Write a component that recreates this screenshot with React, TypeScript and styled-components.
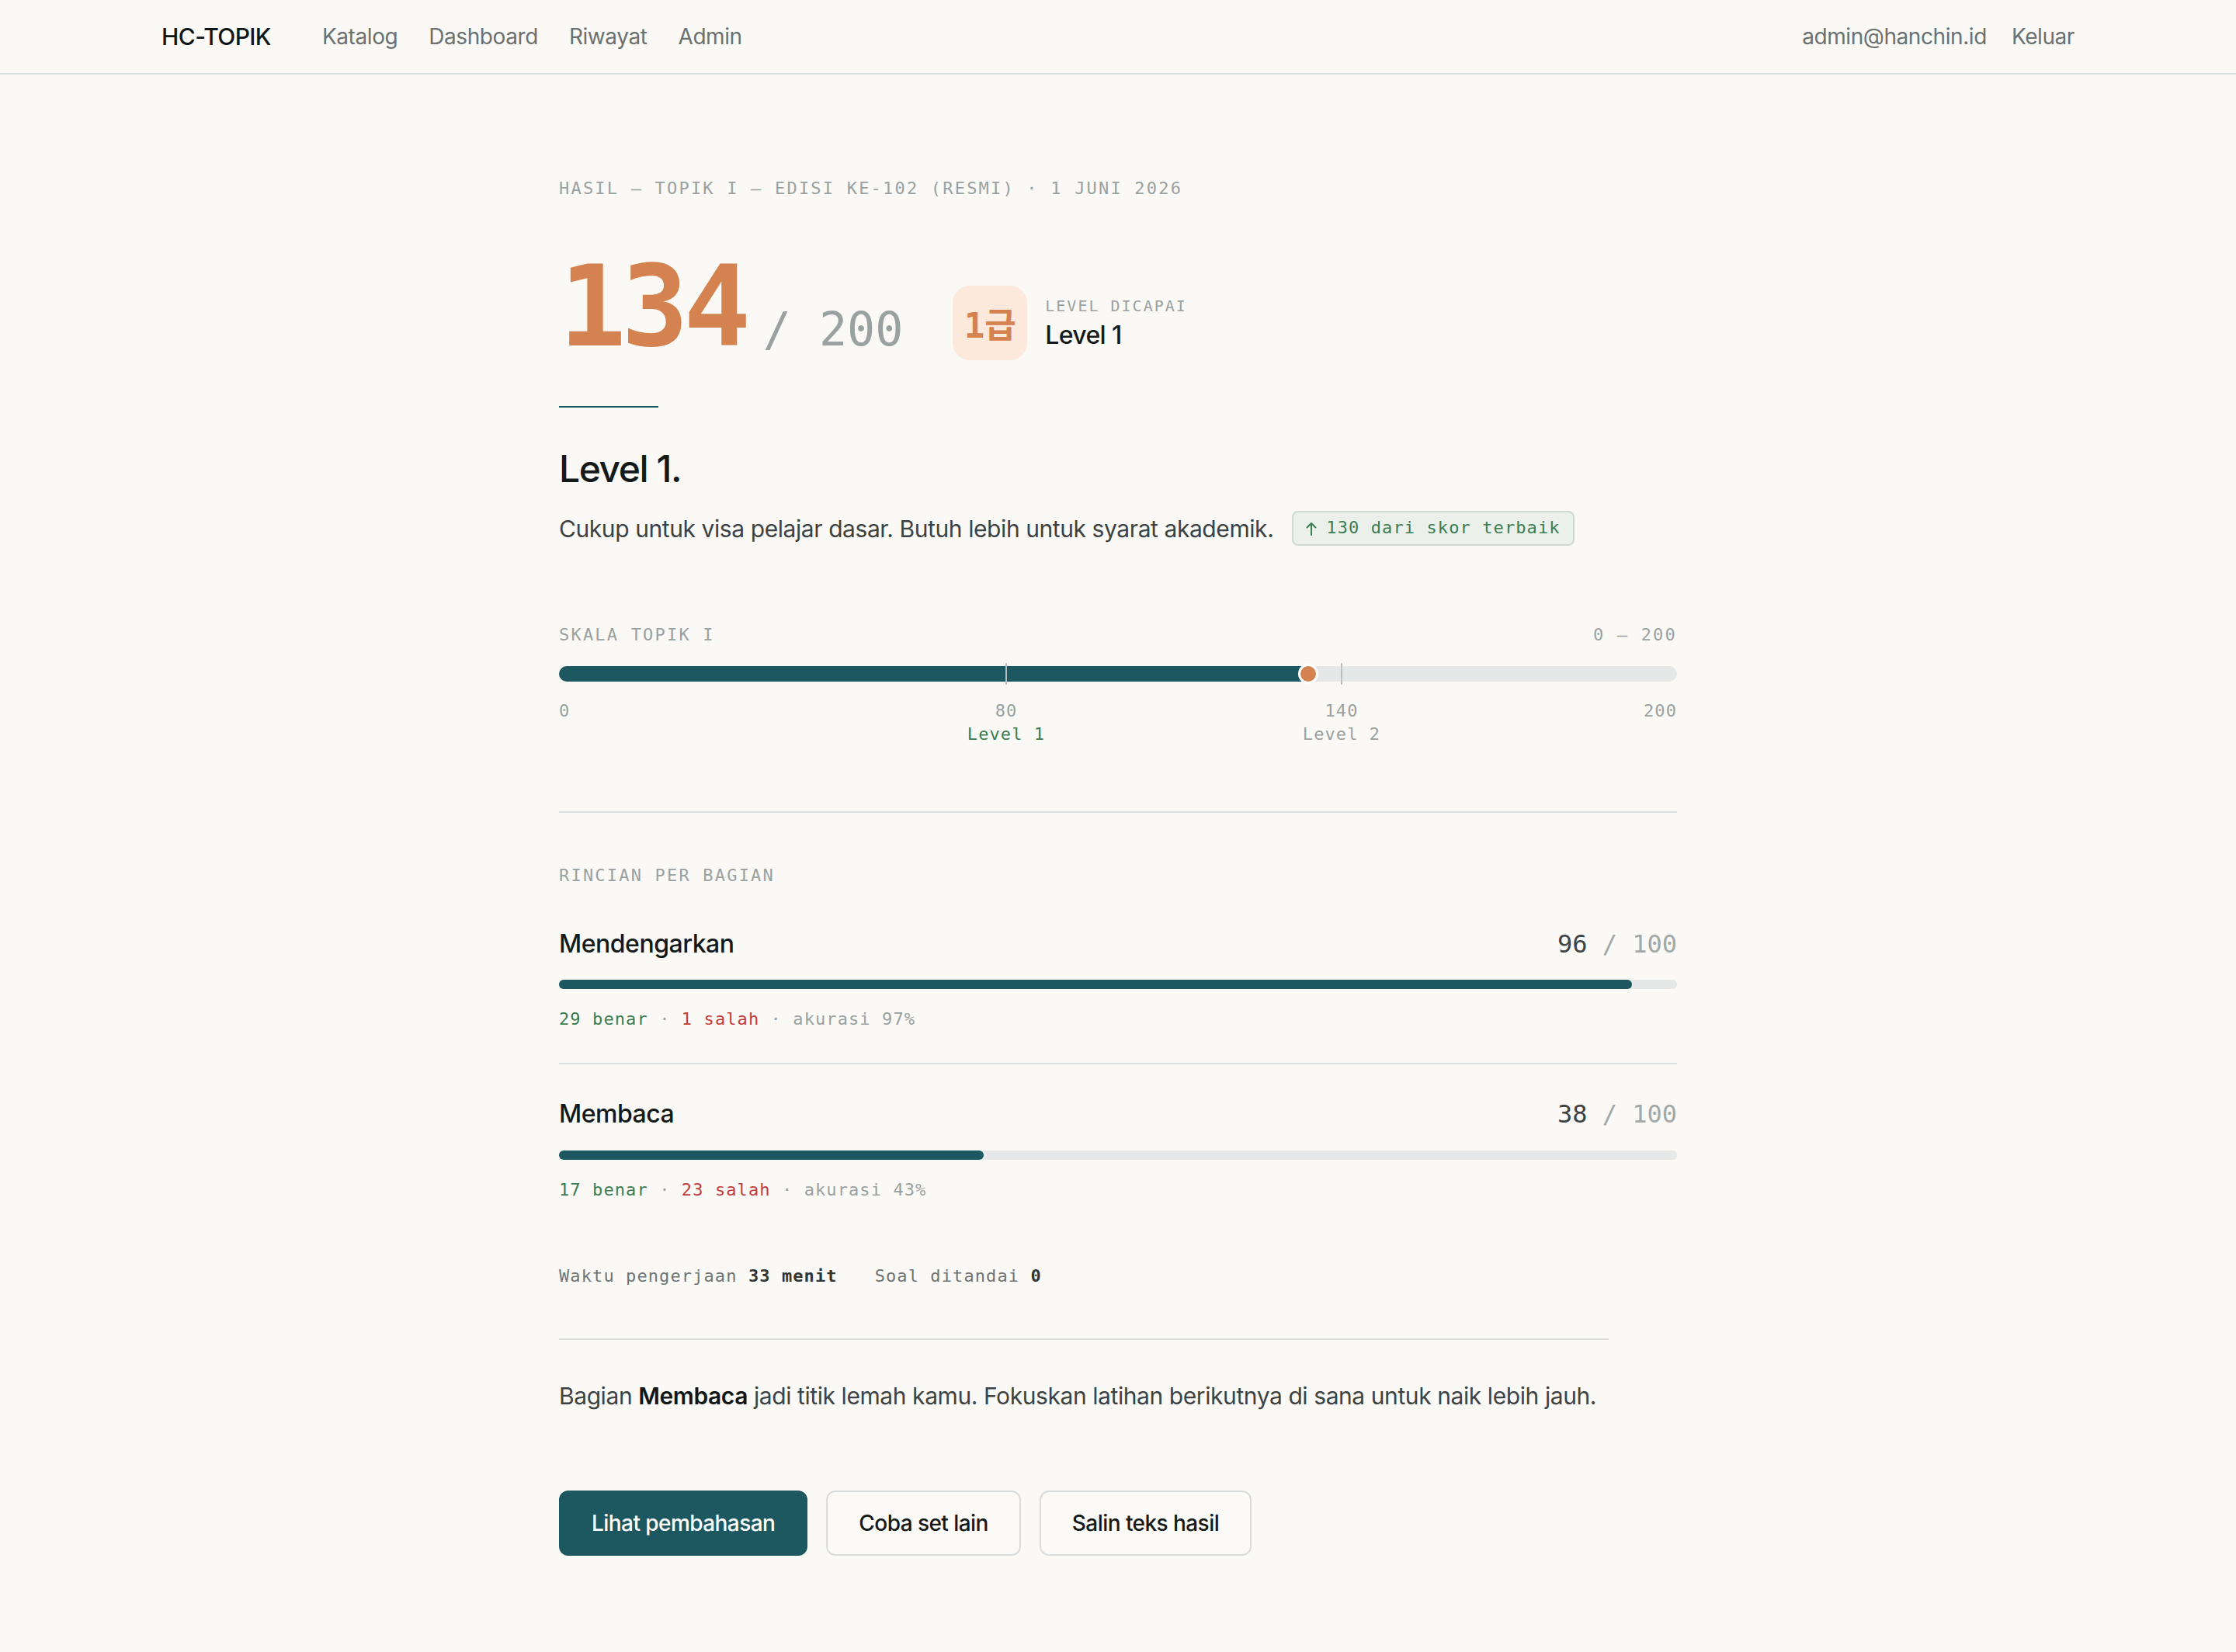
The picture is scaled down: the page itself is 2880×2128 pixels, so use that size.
import React from "react"
import styled, { createGlobalStyle } from "styled-components"

const mono = `"DejaVu Sans Mono", "Noto Sans CJK KR", monospace`
const sans = `Inter, "Noto Sans", "Noto Sans CJK KR", sans-serif`

const teal = "#1d5861"
const orange = "#d4824f"
const green = "#3b7d53"
const line = "#dcdfdf"

const GlobalStyle = createGlobalStyle`
  html, body {
    margin: 0;
    background: #faf9f5;
    font-family: ${sans};
    color: #141919;
  }
  * { box-sizing: border-box; }
`

const NavBar = styled.header`
  height: 96px;
  border-bottom: 2px solid #dadfe0;
`
const NavInner = styled.div`
  max-width: 2464px;
  height: 100%;
  margin: 0 auto;
  display: flex;
  align-items: center;
  justify-content: space-between;
`
const NavGroup = styled.nav<{ $gap: number }>`
  display: flex;
  align-items: center;
  gap: ${(p) => p.$gap}px;
`
const Brand = styled.span`
  font-size: 30px;
  font-weight: 500;
  letter-spacing: -0.02em;
  color: #111616;
  margin-right: 26px;
`
const NavLink = styled.a`
  font-size: 28px;
  letter-spacing: -0.015em;
  color: #6b7171;
  text-decoration: none;
`

const Main = styled.main`
  max-width: 1440px;
  margin: 0 auto;
  padding: 130px 0 120px;
`
const Eyebrow = styled.div<{ $size?: number }>`
  font-family: ${mono};
  font-size: ${(p) => p.$size ?? 22}px;
  line-height: 1.5;
  letter-spacing: 0.1em;
  text-transform: uppercase;
  color: #9aa1a1;
`

const ScoreRow = styled.div`
  display: flex;
  align-items: baseline;
  margin-top: 64px;
`
const BigScore = styled.span`
  font-family: ${mono};
  font-size: 144px;
  line-height: 1;
  font-weight: 700;
  letter-spacing: -0.045em;
  color: ${orange};
`
const OutOf = styled.span`
  font-family: ${mono};
  font-size: 60px;
  line-height: 1;
  color: #9aa1a1;
  margin-left: 22px;
  white-space: pre;
`
const LevelGroup = styled.div`
  align-self: flex-end;
  display: flex;
  align-items: center;
  gap: 23px;
  margin: 0 0 3px 64px;
`
const LevelBadge = styled.div`
  width: 96px;
  height: 96px;
  border-radius: 22px;
  background: #fde8dc;
  color: ${orange};
  display: flex;
  align-items: center;
  justify-content: center;
  font-family: ${mono};
  font-size: 44px;
  font-weight: 600;
`
const LevelText = styled.div`
  display: flex;
  flex-direction: column;
  gap: 2px;
`
const LevelName = styled.div`
  font-size: 32px;
  font-weight: 500;
  letter-spacing: -0.02em;
  line-height: 1.3;
`

const Accent = styled.div`
  width: 128px;
  height: 2px;
  background: ${teal};
  margin-top: 56px;
`
const Heading = styled.h1`
  margin: 50px 0 0;
  font-size: 48px;
  line-height: 1.2;
  font-weight: 500;
  letter-spacing: -0.03em;
`
const DescRow = styled.div`
  display: flex;
  align-items: center;
  gap: 24px;
  margin-top: 24px;
`
const Desc = styled.p`
  margin: 0;
  font-size: 30px;
  line-height: 1.6;
  letter-spacing: -0.014em;
  color: #3d4344;
`
const Chip = styled.span`
  display: inline-flex;
  align-items: center;
  gap: 12px;
  font-family: ${mono};
  font-size: 22px;
  letter-spacing: 0.05em;
  color: ${green};
  background: #ecf0ea;
  border: 2px solid #cddbcf;
  border-radius: 8px;
  padding: 6px 16px;
  line-height: 1.3;
`

const ScaleSection = styled.section`
  margin-top: 96px;
  padding-bottom: 78px;
  border-bottom: 2px solid ${line};
`
const SpaceRow = styled.div`
  display: flex;
  justify-content: space-between;
`
const Track = styled.div<{ $h: number }>`
  position: relative;
  height: ${(p) => p.$h}px;
  background: #e6e8e7;
  border-radius: 999px;
`
const Fill = styled.div`
  height: 100%;
  background: ${teal};
  border-radius: 999px 0 0 999px;
`
const RoundFill = styled(Fill)`
  border-radius: 999px;
`
const Tick = styled.div`
  position: absolute;
  top: -4px;
  bottom: -4px;
  width: 2px;
  margin-left: -1px;
  background: #b9bfbf;
`
const Marker = styled.div`
  position: absolute;
  top: 50%;
  width: 26px;
  height: 26px;
  border-radius: 50%;
  border: 3px solid #fff;
  background: ${orange};
  transform: translate(-50%, -50%);
`
const TickLabels = styled.div`
  position: relative;
  height: 66px;
  margin-top: 23px;
`
const TickLabel = styled.div<{ $edge?: "start" | "end" }>`
  position: absolute;
  top: 0;
  display: flex;
  flex-direction: column;
  align-items: ${(p) => (p.$edge === "start" ? "flex-start" : p.$edge === "end" ? "flex-end" : "center")};
  transform: ${(p) => (p.$edge ? "none" : "translateX(-50%)")};
  ${(p) => (p.$edge === "end" ? "right: 0;" : "")}
`
const Small = styled.span<{ $color?: string; $bold?: boolean }>`
  font-family: ${mono};
  font-size: 22px;
  line-height: 1.4;
  letter-spacing: 0.05em;
  color: ${(p) => p.$color ?? "#9aa1a1"};
  font-weight: ${(p) => (p.$bold ? 700 : 400)};
  white-space: pre;
`

const Breakdown = styled.section`
  margin-top: 64px;
`
const Part = styled.div`
  padding: 40px 0 40px;
  & + & {
    border-top: 2px solid ${line};
    padding-top: 42px;
  }
`
const PartHead = styled.div`
  display: flex;
  align-items: baseline;
  justify-content: space-between;
  margin-bottom: 24px;
`
const PartName = styled.span`
  font-size: 32px;
  font-weight: 500;
  line-height: 1.4;
  letter-spacing: -0.015em;
`
const PartScore = styled.span`
  font-family: ${mono};
  font-size: 32px;
  color: #3d4344;
  white-space: pre;
`
const Muted = styled.span`
  color: #a2a8a8;
`
const Stats = styled.div`
  margin-top: 24px;
  display: flex;
`
const Meta = styled.div`
  display: flex;
  gap: 48px;
  margin-top: 40px;
`
const Closing = styled.section`
  max-width: 1352px;
  margin-top: 64px;
  padding-top: 48px;
  border-top: 2px solid ${line};
`
const Note = styled.p`
  margin: 0;
  font-size: 30px;
  line-height: 1.6;
  color: #3d4344;
  letter-spacing: -0.014em;
  b {
    font-weight: 600;
    color: #111616;
  }
`
const Actions = styled.div`
  display: flex;
  gap: 24px;
  margin-top: 98px;
`
const Button = styled.button<{ $primary?: boolean }>`
  height: 84px;
  padding: 0 40px;
  border-radius: 12px;
  font-family: ${sans};
  font-size: 28px;
  font-weight: 500;
  letter-spacing: -0.02em;
  cursor: pointer;
  border: 2px solid ${(p) => (p.$primary ? teal : "#d8dcdc")};
  background: ${(p) => (p.$primary ? teal : "#fbfaf7")};
  color: ${(p) => (p.$primary ? "#ffffff" : "#141919")};
`

const UpArrow = () => (
  <svg width="14" height="18" viewBox="0 0 14 18" fill="none" stroke="currentColor" strokeWidth="2" strokeLinecap="round" strokeLinejoin="round">
    <path d="M7 17V2M1.5 7.5L7 2l5.5 5.5" />
  </svg>
)

const SCORE = 134
const MAX = 200
const pct = (v: number, m: number) => `${(v / m) * 100}%`

const parts = [
  { name: "Mendengarkan", score: 96, right: 29, wrong: 1, acc: 97 },
  { name: "Membaca", score: 38, right: 17, wrong: 23, acc: 43 },
]

const levels = [
  { at: 80, name: "Level 1", reached: true },
  { at: 140, name: "Level 2", reached: false },
]

export default function App() {
  return (
    <>
      <GlobalStyle />
      <NavBar>
        <NavInner>
          <NavGroup $gap={40}>
            <Brand>HC-TOPIK</Brand>
            <NavLink>Katalog</NavLink>
            <NavLink>Dashboard</NavLink>
            <NavLink>Riwayat</NavLink>
            <NavLink>Admin</NavLink>
          </NavGroup>
          <NavGroup $gap={32}>
            <NavLink>admin@hanchin.id</NavLink>
            <NavLink>Keluar</NavLink>
          </NavGroup>
        </NavInner>
      </NavBar>

      <Main>
        <Eyebrow>Hasil — TOPIK I — Edisi ke-102 (Resmi) · 1 Juni 2026</Eyebrow>

        <ScoreRow>
          <BigScore>{SCORE}</BigScore>
          <OutOf>/ {MAX}</OutOf>
          <LevelGroup>
            <LevelBadge>1급</LevelBadge>
            <LevelText>
              <Eyebrow $size={20}>Level dicapai</Eyebrow>
              <LevelName>Level 1</LevelName>
            </LevelText>
          </LevelGroup>
        </ScoreRow>

        <Accent />
        <Heading>Level 1.</Heading>
        <DescRow>
          <Desc>Cukup untuk visa pelajar dasar. Butuh lebih untuk syarat akademik.</Desc>
          <Chip>
            <UpArrow />
            130 dari skor terbaik
          </Chip>
        </DescRow>

        <ScaleSection>
          <SpaceRow>
            <Eyebrow>Skala TOPIK I</Eyebrow>
            <Eyebrow>0 — 200</Eyebrow>
          </SpaceRow>
          <Track $h={20} style={{ marginTop: 24 }}>
            <Fill style={{ width: pct(SCORE, MAX) }} />
            {levels.map((l) => (
              <Tick key={l.at} style={{ left: pct(l.at, MAX) }} />
            ))}
            <Marker style={{ left: pct(SCORE, MAX) }} />
          </Track>
          <TickLabels>
            <TickLabel $edge="start">
              <Small>0</Small>
            </TickLabel>
            {levels.map((l) => (
              <TickLabel key={l.at} style={{ left: pct(l.at, MAX) }}>
                <Small>{l.at}</Small>
                <Small $color={l.reached ? green : "#9aa1a1"}>{l.name}</Small>
              </TickLabel>
            ))}
            <TickLabel $edge="end">
              <Small>200</Small>
            </TickLabel>
          </TickLabels>
        </ScaleSection>

        <Breakdown>
          <Eyebrow style={{ marginBottom: 10 }}>Rincian per bagian</Eyebrow>
          {parts.map((p) => (
            <Part key={p.name}>
              <PartHead>
                <PartName>{p.name}</PartName>
                <PartScore>
                  {p.score} <Muted>/ 100</Muted>
                </PartScore>
              </PartHead>
              <Track $h={12}>
                <RoundFill style={{ width: pct(p.score, 100) }} />
              </Track>
              <Stats>
                <Small $color={green}>{p.right} benar</Small>
                <Small> · </Small>
                <Small $color="#c23b3b">{p.wrong} salah</Small>
                <Small> · akurasi {p.acc}%</Small>
              </Stats>
            </Part>
          ))}
          <Meta>
            <span>
              <Small $color="#6f7575">Waktu pengerjaan </Small>
              <Small $color="#2f3535" $bold>33 menit</Small>
            </span>
            <span>
              <Small $color="#6f7575">Soal ditandai </Small>
              <Small $color="#2f3535" $bold>0</Small>
            </span>
          </Meta>
        </Breakdown>

        <Closing>
          <Note>
            Bagian <b>Membaca</b> jadi titik lemah kamu. Fokuskan latihan berikutnya di sana untuk naik lebih jauh.
          </Note>
          <Actions>
            <Button $primary>Lihat pembahasan</Button>
            <Button>Coba set lain</Button>
            <Button>Salin teks hasil</Button>
          </Actions>
        </Closing>
      </Main>
    </>
  )
}
